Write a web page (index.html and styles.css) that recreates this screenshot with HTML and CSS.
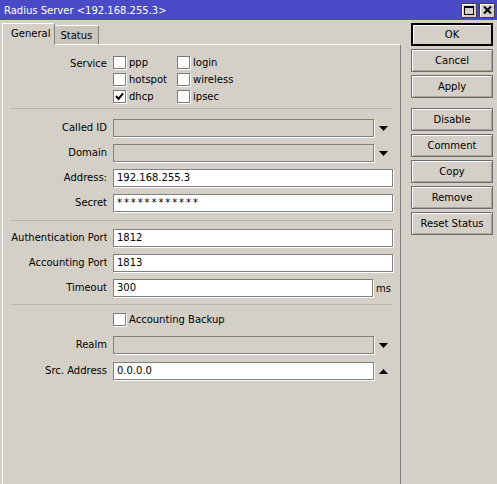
FILE: index.html
```html
<!DOCTYPE html>
<html lang="en">
<head>
    <meta charset="UTF-8">
    <title>Radius Server</title>
    <link rel="stylesheet" href="styles.css">
</head>
<body>
    <div class="titlebar">
        <span class="title">Radius Server &lt;192.168.255.3&gt;</span>
        <span class="tb-btn">
            <svg width="10" height="9" viewBox="0 0 10 9"><rect x="0.5" y="0.5" width="9" height="8" fill="none" stroke="#000"/><rect x="0" y="0" width="10" height="2" fill="#000"/></svg>
        </span>
        <span class="tb-btn">
            <svg width="9" height="8" viewBox="0 0 9 8"><path d="M1 0.5 L8 7.5 M8 0.5 L1 7.5" stroke="#000" stroke-width="2"/></svg>
        </span>
    </div>

    <div class="content">
        <div class="main">
            <div class="tabs">
                <div class="tab active">General</div>
                <div class="tab">Status</div>
                <div class="tab-fill"></div>
            </div>
            <div class="panel">
                <div class="section service">
                    <div class="label">Service</div>
                    <div class="checks">
                        <label class="check"><span class="box"></span>ppp</label>
                        <label class="check"><span class="box"></span>login</label>
                        <label class="check"><span class="box"></span>hotspot</label>
                        <label class="check"><span class="box"></span>wireless</label>
                        <label class="check"><span class="box"><svg width="9" height="9" viewBox="0 0 9 9"><path d="M1 4 L3.5 7 L8 1.5" fill="none" stroke="#000" stroke-width="2"/></svg></span>dhcp</label>
                        <label class="check"><span class="box"></span>ipsec</label>
                    </div>
                </div>

                <div class="section s-main">
                    <div class="row">
                        <div class="label">Called ID</div>
                        <div class="field disabled"></div>
                        <span class="arrow"><svg width="9" height="5" viewBox="0 0 9 5"><polygon points="0,0 9,0 4.5,5" fill="#000"/></svg></span>
                    </div>
                    <div class="row">
                        <div class="label">Domain</div>
                        <div class="field disabled"></div>
                        <span class="arrow"><svg width="9" height="5" viewBox="0 0 9 5"><polygon points="0,0 9,0 4.5,5" fill="#000"/></svg></span>
                    </div>
                    <div class="row">
                        <div class="label">Address:</div>
                        <div class="field wide">192.168.255.3</div>
                    </div>
                    <div class="row">
                        <div class="label">Secret</div>
                        <div class="field wide secret">************</div>
                    </div>
                </div>

                <div class="section s-ports">
                    <div class="row">
                        <div class="label"><span class="over">Authentication Port:</span></div>
                        <div class="field wide">1812</div>
                    </div>
                    <div class="row">
                        <div class="label"><span class="over">Accounting Port:</span></div>
                        <div class="field wide">1813</div>
                    </div>
                    <div class="row">
                        <div class="label">Timeout</div>
                        <div class="field short">300</div>
                        <span class="unit">ms</span>
                    </div>
                </div>

                <div class="section s-extra">
                    <div class="row">
                        <div class="label"></div>
                        <label class="check"><span class="box"></span>Accounting Backup</label>
                    </div>
                    <div class="row">
                        <div class="label">Realm</div>
                        <div class="field disabled"></div>
                        <span class="arrow"><svg width="9" height="5" viewBox="0 0 9 5"><polygon points="0,0 9,0 4.5,5" fill="#000"/></svg></span>
                    </div>
                    <div class="row">
                        <div class="label">Src. Address</div>
                        <div class="field">0.0.0.0</div>
                        <span class="arrow"><svg width="9" height="5" viewBox="0 0 9 5"><polygon points="0,5 9,5 4.5,0" fill="#000"/></svg></span>
                    </div>
                </div>
            </div>
        </div>

        <div class="side">
            <div class="btn default">OK</div>
            <div class="btn">Cancel</div>
            <div class="btn">Apply</div>
            <div class="btn group">Disable</div>
            <div class="btn">Comment</div>
            <div class="btn">Copy</div>
            <div class="btn">Remove</div>
            <div class="btn">Reset Status</div>
        </div>
    </div>
</body>
</html>
```

FILE: styles.css
```css
* {
    box-sizing: border-box;
}
html, body {
    margin: 0;
    height: 100%;
}
body {
    font-family: "DejaVu Sans", sans-serif;
    font-size: 10px;
    color: #000;
    background: #d4d0c8;
    display: flex;
    flex-direction: column;
    overflow: hidden;
}
.titlebar {
    height: 20px;
    background: #4a4ac6;
    display: flex;
    align-items: center;
    padding: 0 2px 0 4px;
    gap: 2px;
}
.title {
    flex: 1;
    color: #fff;
    font-size: 10px;
}
.tb-btn {
    width: 16px;
    height: 15px;
    background: #d4d0c8;
    border: 1px solid #404040;
    box-shadow: inset 1px 1px 0 #fff;
    display: flex;
    align-items: center;
    justify-content: center;
}
.content {
    flex: 1;
    display: flex;
    padding-top: 3px;
}
.main {
    width: 399px;
    margin-left: 2px;
    display: flex;
    flex-direction: column;
}
.tabs {
    height: 22px;
    display: flex;
    align-items: flex-end;
}
.tab {
    height: 20px;
    padding: 0 6px 0 5px;
    line-height: 19px;
    background: #c9c5bd;
    border-top: 1px solid #fff;
    border-right: 1px solid #808080;
    border-bottom: 1px solid #fff;
}
.tab.active {
    height: 22px;
    line-height: 20px;
    padding: 0 4px 0 8px;
    background: #d4d0c8;
    border-left: 1px solid #fff;
    border-bottom: none;
}
.tab-fill {
    flex: 1;
    border-bottom: 1px solid #fff;
    border-right: 1px solid #808080;
    height: 1px;
}
.panel {
    flex: 1;
    border-left: 1px solid #fff;
    border-right: 1px solid #808080;
    padding: 0 7px;
}
.section {
    border-bottom: 1px solid #bcb8b0;
}
.label {
    width: 97px;
    margin-right: 1px;
    padding-left: 1px;
    flex-shrink: 0;
    text-align: right;
    white-space: nowrap;
    overflow: hidden;
    line-height: 18px;
}
/* long labels: colon sits past the clip edge, like the original */
.over {
    margin-right: -4px;
}
.service {
    display: flex;
    gap: 5px;
    padding: 10px 0 2px;
}
.checks {
    display: grid;
    grid-template-columns: 64px auto;
    grid-auto-rows: 17px;
}
.check {
    display: flex;
    align-items: flex-start;
    gap: 3px;
    line-height: 15px;
}
.box {
    width: 13px;
    height: 13px;
    margin-top: 1px;
    background: #fff;
    border: 1px solid #7c7c7c;
    box-shadow: 1px 1px 0 #fff;
    display: flex;
    align-items: center;
    justify-content: center;
}
.row {
    display: flex;
    align-items: center;
    gap: 5px;
    height: 18px;
    margin-bottom: 7px;
}
.row:last-child {
    margin-bottom: 0;
}
.s-main {
    padding: 10px 0 8px;
}
.s-ports {
    padding: 8px 0 7px;
}
.s-extra {
    padding-top: 5px;
    border-bottom: none;
}
.s-extra .row {
    margin-bottom: 8px;
}
.s-extra .check {
    line-height: 19px;
}
.s-extra .box {
    margin-top: 3px;
}
.field {
    width: 261px;
    height: 18px;
    background: #fff;
    border: 1px solid #808080;
    box-shadow: 1px 1px 0 #fff;
    padding-left: 3px;
    line-height: 16px;
    white-space: nowrap;
}
.field.disabled {
    background: #d4d0c8;
}
.field.wide {
    width: 280px;
}
.field.short {
    width: 260px;
}
.field.secret {
    letter-spacing: 1.9px;
}
.arrow {
    width: 9px;
    display: flex;
    justify-content: center;
}
.unit {
    margin-left: -2px;
}
.side {
    width: 82px;
    margin-left: 10px;
    display: flex;
    flex-direction: column;
    gap: 3px;
}
.btn {
    height: 23px;
    line-height: 21px;
    text-align: center;
    border: 1px solid #6d6d6d;
    box-shadow: inset 1px 1px 0 #fff, inset -1px -1px 0 #a8a49c;
}
.btn.default {
    border: 2px solid #000;
    line-height: 19px;
    box-shadow: inset 1px 1px 0 #fff;
}
.btn.group {
    margin-top: 7px;
}
```
